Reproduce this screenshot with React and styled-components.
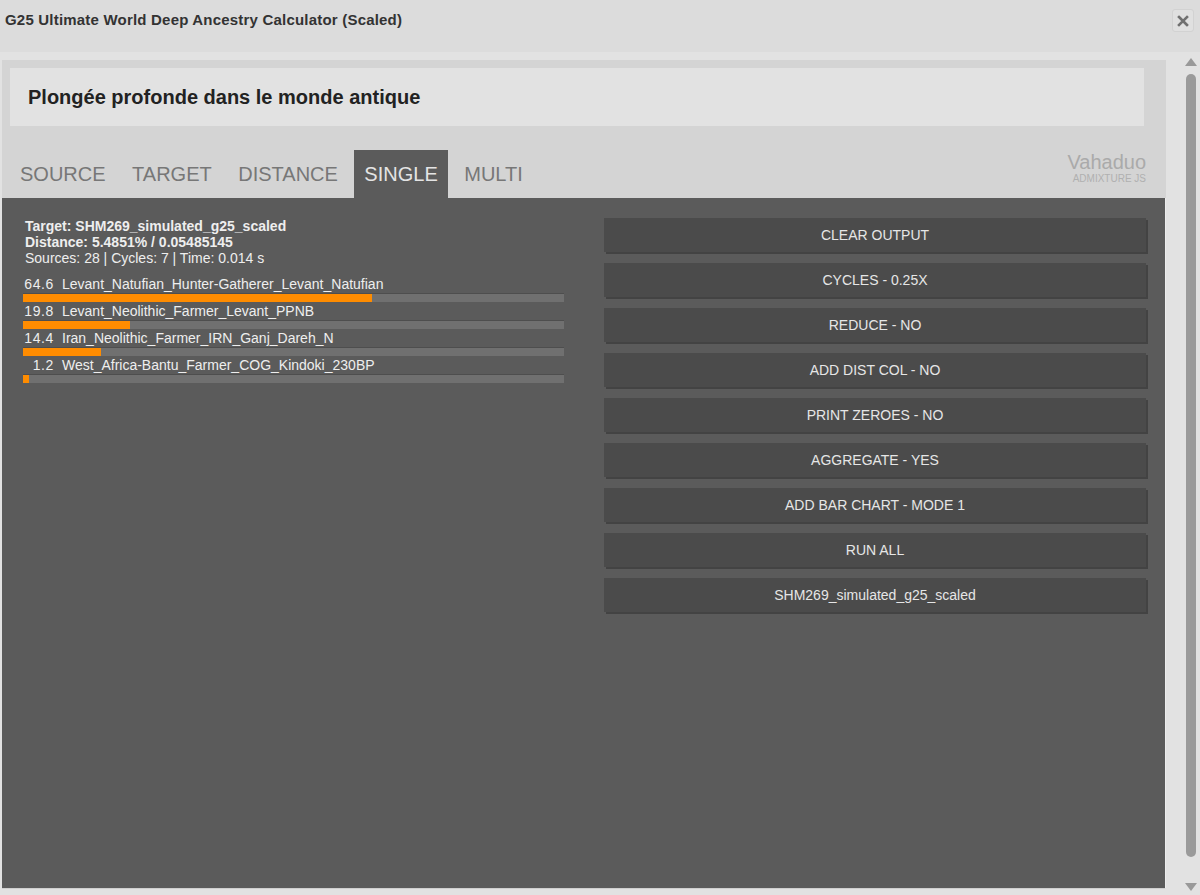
import React from "react";
import styled, { createGlobalStyle } from "styled-components";

const Global = createGlobalStyle`
  html, body { margin: 0; padding: 0; background: #e2e2e2; }
  body { font-family: "Liberation Sans", Arial, sans-serif; }
  * { box-sizing: border-box; }
`;

const Page = styled.div`
  width: 1200px;
  height: 895px;
  display: flex;
  flex-direction: column;
  background: #e2e2e2;
  overflow: hidden;
`;

const TitleBar = styled.div`
  height: 52px;
  flex: none;
  background: #dcdcdc;
  display: flex;
  align-items: flex-start;
  justify-content: space-between;
  padding: 11px 6px 0 5px;
`;

const Title = styled.div`
  font-size: 15px;
  letter-spacing: 0.2px;
  font-weight: bold;
  color: #333;
  line-height: 18px;
`;

const CloseBtn = styled.div`
  width: 22px;
  height: 23px;
  margin-top: -2px;
  border: 1px solid #d2d2d2;
  border-radius: 3px;
  background: #e0e0e0;
  display: flex;
  align-items: center;
  justify-content: center;
`;

const Body = styled.div`
  flex: 1;
  display: flex;
  min-height: 0;
`;

const Panel = styled.div`
  width: 1164px;
  margin: 8px 0 6px 2px;
  background: #d4d4d4;
  display: flex;
  flex-direction: column;
`;

const HeaderBox = styled.div`
  margin: 8px 22px 0 8px;
  height: 58px;
  background: #e2e2e2;
  display: flex;
  align-items: center;
  padding-left: 18px;
  font-size: 20px;
  font-weight: bold;
  color: #222;
`;

const TabsRow = styled.div`
  height: 72px;
  display: flex;
  align-items: flex-end;
  justify-content: space-between;
  padding: 0 20px 0 8px;
`;

const Tabs = styled.div`
  display: flex;
  gap: 6.5px;
`;

const Tab = styled.div`
  height: 48px;
  line-height: 48px;
  padding: 0 10px;
  font-size: 20px;
  color: ${(p) => (p.$active ? "#e4e4e4" : "#777")};
  background: ${(p) => (p.$active ? "#5b5b5b" : "transparent")};
`;

const Logo = styled.div`
  align-self: flex-start;
  margin-top: 25px;
  text-align: right;
  color: #aaa;
`;

const LogoName = styled.div`
  font-size: 20px;
  line-height: 22px;
`;

const LogoSub = styled.div`
  font-size: 10px;
  line-height: 12px;
  color: #b0b0b0;
`;

const Dark = styled.div`
  flex: 1;
  background: #5b5b5b;
  border-right: 1px solid #ececec;
  border-bottom: 1px solid #cfcfcf;
  display: grid;
  grid-template-columns: 541px 544px;
  column-gap: 40px;
  align-content: start;
  align-items: start;
  padding: 20px 0 0 21px;
`;

const Output = styled.div`
  color: #eee;
  font-size: 14px;
`;

const InfoLine = styled.div`
  line-height: 16px;
  font-weight: ${(p) => (p.$bold ? "bold" : "normal")};
  padding-left: 2px;
`;

const Rows = styled.div`
  margin-top: 10px;
`;

const Row = styled.div`
  margin-bottom: 1px;
`;

const RowText = styled.div`
  display: flex;
  line-height: 17px;
  height: 17px;
`;

const Num = styled.span`
  width: 31px;
  text-align: right;
  margin-right: 8px;
  letter-spacing: 0.6px;
`;

const Bar = styled.div`
  height: 9px;
  background: #707070;
  border-top: 1px solid #4e4e4e;
`;

const Fill = styled.div`
  height: 100%;
  background: #ff8c00;
`;

const Buttons = styled.div`
  display: flex;
  flex-direction: column;
  gap: 11px;
`;

const Button = styled.div`
  width: 542px;
  height: 34px;
  background: #4b4b4b;
  box-shadow: 2px 2px 0 #434343;
  color: #e6e6e6;
  font-size: 14px;
  display: flex;
  align-items: center;
  justify-content: center;
`;

const Scroll = styled.div`
  flex: 1;
  display: flex;
  flex-direction: column;
  align-items: center;
  padding: 6px 0 4px 16px;
`;

const Arrow = styled.div`
  width: 0;
  height: 0;
  border-left: 6px solid transparent;
  border-right: 6px solid transparent;
  ${(p) =>
    p.$down
      ? "border-top: 8px solid #999;"
      : "border-bottom: 8px solid #999;"}
`;

const Thumb = styled.div`
  flex: 1;
  width: 10px;
  border-radius: 5px;
  background: #9a9a9a;
  margin: 8px 0 26px;
`;

const rows = [
  ["64.6", "Levant_Natufian_Hunter-Gatherer_Levant_Natufian"],
  ["19.8", "Levant_Neolithic_Farmer_Levant_PPNB"],
  ["14.4", "Iran_Neolithic_Farmer_IRN_Ganj_Dareh_N"],
  ["1.2", "West_Africa-Bantu_Farmer_COG_Kindoki_230BP"],
];

const buttons = [
  "CLEAR OUTPUT",
  "CYCLES - 0.25X",
  "REDUCE - NO",
  "ADD DIST COL - NO",
  "PRINT ZEROES - NO",
  "AGGREGATE - YES",
  "ADD BAR CHART - MODE 1",
  "RUN ALL",
  "SHM269_simulated_g25_scaled",
];

const tabs = ["SOURCE", "TARGET", "DISTANCE", "SINGLE", "MULTI"];

export default function App() {
  return (
    <Page>
      <Global />
      <TitleBar>
        <Title>G25 Ultimate World Deep Ancestry Calculator (Scaled)</Title>
        <CloseBtn>
          <svg width="12" height="12" viewBox="0 0 12 12">
            <path d="M2 2L10 10M10 2L2 10" stroke="#707070" strokeWidth="2.6" strokeLinecap="square" />
          </svg>
        </CloseBtn>
      </TitleBar>
      <Body>
        <Panel>
          <HeaderBox>Plongée profonde dans le monde antique</HeaderBox>
          <TabsRow>
            <Tabs>
              {tabs.map((t) => (
                <Tab key={t} $active={t === "SINGLE"}>
                  {t}
                </Tab>
              ))}
            </Tabs>
            <Logo>
              <LogoName>Vahaduo</LogoName>
              <LogoSub>ADMIXTURE JS</LogoSub>
            </Logo>
          </TabsRow>
          <Dark>
            <Output>
              <InfoLine $bold>Target: SHM269_simulated_g25_scaled</InfoLine>
              <InfoLine $bold>Distance: 5.4851% / 0.05485145</InfoLine>
              <InfoLine>Sources: 28 | Cycles: 7 | Time: 0.014 s</InfoLine>
              <Rows>
                {rows.map(([n, name]) => (
                  <Row key={name}>
                    <RowText>
                      <Num>{n}</Num>
                      <span>{name}</span>
                    </RowText>
                    <Bar>
                      <Fill style={{ width: `${n}%` }} />
                    </Bar>
                  </Row>
                ))}
              </Rows>
            </Output>
            <Buttons>
              {buttons.map((b) => (
                <Button key={b}>{b}</Button>
              ))}
            </Buttons>
          </Dark>
        </Panel>
        <Scroll>
          <Arrow />
          <Thumb />
          <Arrow $down />
        </Scroll>
      </Body>
    </Page>
  );
}
